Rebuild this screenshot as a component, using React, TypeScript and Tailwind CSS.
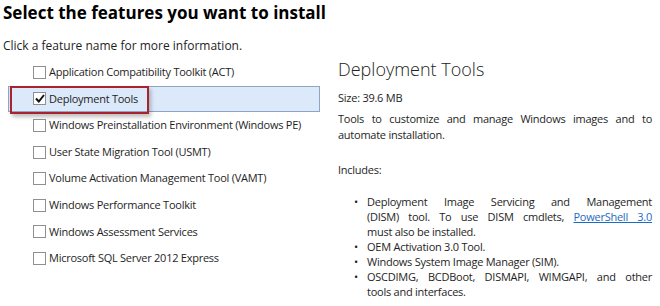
const features = [
  "Application Compatibility Toolkit (ACT)",
  "Deployment Tools",
  "Windows Preinstallation Environment (Windows PE)",
  "User State Migration Tool (USMT)",
  "Volume Activation Management Tool (VAMT)",
  "Windows Performance Toolkit",
  "Windows Assessment Services",
  "Microsoft SQL Server 2012 Express",
];

function Check(props: { checked: boolean }) {
  return (
    <span className="flex h-[13px] w-[13px] shrink-0 items-center justify-center border border-[#8f8f8f] bg-white">
      {props.checked && (
        <svg width="10" height="9" viewBox="0 0 10 9">
          <path d="M1 4.5 L3.8 7.5 L9 1" fill="none" stroke="#111" strokeWidth="2" />
        </svg>
      )}
    </span>
  );
}

// each entry of lines is one printed line; all but the last are stretched edge to edge
function Bullet(props: { lines: React.ReactNode[] }) {
  const last = props.lines.length - 1;
  return (
    <li className="flex gap-[9px] leading-[15px]">
      <span className="w-[4px] shrink-0">•</span>
      <div className="min-w-0 flex-1">
        {props.lines.map((l, i) => (
          <span key={i} className={`block whitespace-nowrap ${i < last ? "text-justify [text-align-last:justify]" : ""}`}>
            {l}
          </span>
        ))}
      </div>
    </li>
  );
}

export default function App() {
  return (
    <div className="h-[306px] w-[660px] overflow-hidden bg-white font-['Open_Sans','Noto_Sans',sans-serif] text-[11px] text-[#1e1e1e]">
      <h1 className="pl-[3px] pt-[2px] text-[17px] font-bold leading-[22px] text-black">
        Select the features you want to install
      </h1>
      <p className="mt-[14px] pl-[3px] text-[12px] leading-[16px]">Click a feature name for more information.</p>
      <div className="mt-[5px] flex tracking-[-0.25px]">
        <div className="w-[320px] shrink-0 pl-[8px]">
          {features.map((f, i) => {
            const sel = i === 1;
            return (
              <div
                key={f}
                className={`relative flex h-[26.6px] items-center gap-[3px] pl-[24px] ${
                  sel ? "border border-[#8ea6c4] bg-[#dce9fb]" : "border border-transparent"
                }`}
              >
                <Check checked={sel} />
                <span className="whitespace-nowrap">{f}</span>
                {sel && (
                  <span className="absolute -top-[1px] left-[1px] h-[28px] w-[139px] border-2 border-[#a8232d] shadow-[2px_3px_4px_rgba(0,0,0,0.25)]" />
                )}
              </div>
            );
          })}
        </div>
        <div className="w-[332px] pl-[18px]">
          <h2 className="text-[18px] font-light leading-[20px] tracking-normal text-[#222]">Deployment Tools</h2>
          <p className="mt-[11px] leading-[15px]">Size: 39.6 MB</p>
          <p className="mt-[6px] text-justify leading-[16px]">
            Tools to customize and manage Windows images and to automate installation.
          </p>
          <p className="mt-[19px] leading-[15px]">Includes:</p>
          <ul className="mt-[17px] pl-[16px]">
            <Bullet
              lines={[
                "Deployment Image Servicing and Management",
                <>
                  (DISM) tool. To use DISM cmdlets, <a className="text-[#1a6bc4] underline">PowerShell 3.0</a>
                </>,
                "must also be installed.",
              ]}
            />
            <Bullet lines={["OEM Activation 3.0 Tool."]} />
            <Bullet lines={["Windows System Image Manager (SIM)."]} />
            <Bullet lines={["OSCDIMG, BCDBoot, DISMAPI, WIMGAPI, and other", "tools and interfaces."]} />
          </ul>
        </div>
      </div>
    </div>
  );
}
